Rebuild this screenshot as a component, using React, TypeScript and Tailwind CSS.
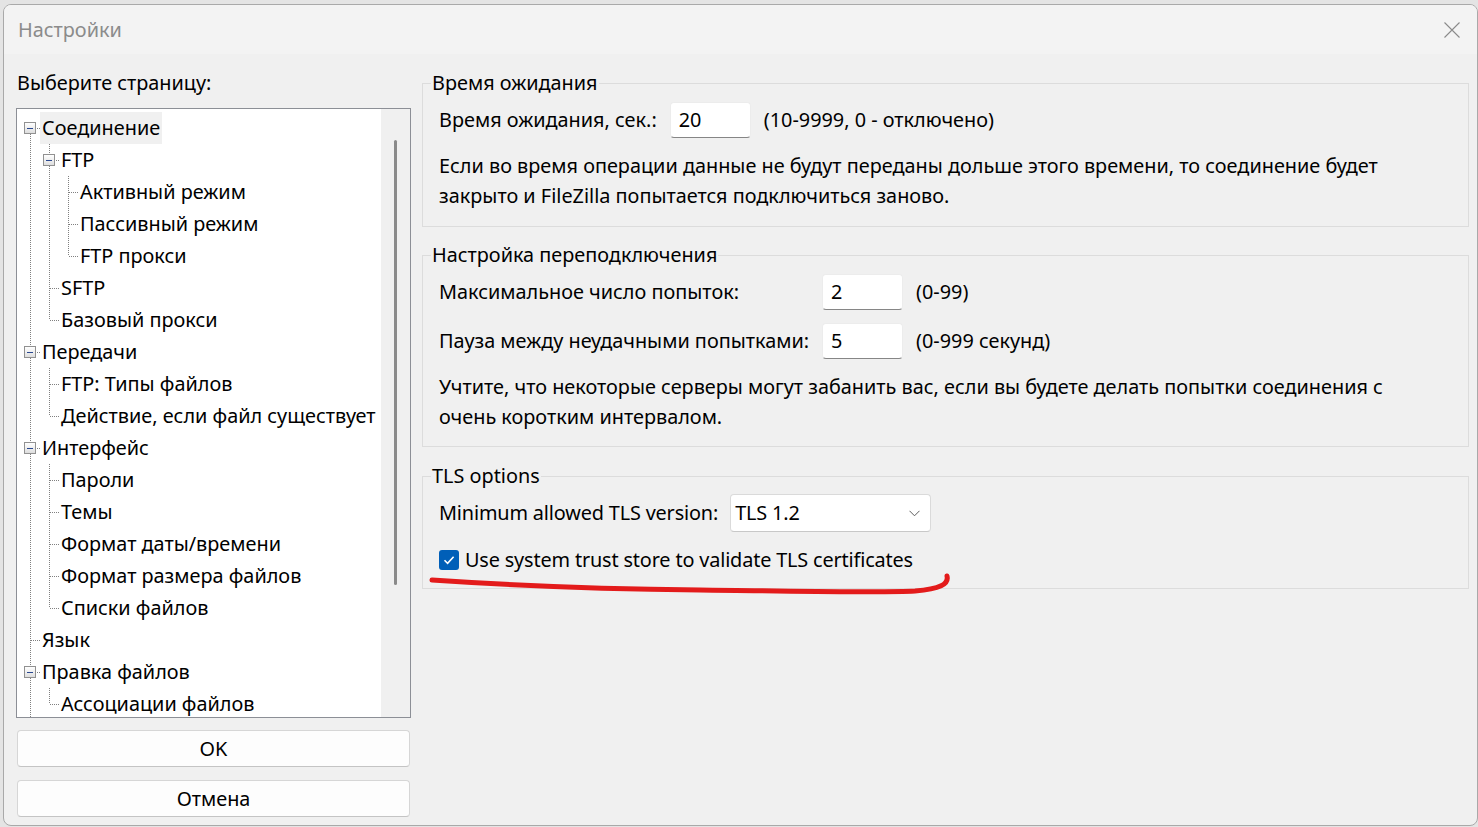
import React from "react";

type Item = { label: string; level: number; expanded?: boolean; selected?: boolean; more?: boolean };

// "more" marks a root item whose next sibling is scrolled out of view
const items: Item[] = [
  { label: "Соединение", level: 0, expanded: true, selected: true },
  { label: "FTP", level: 1, expanded: true },
  { label: "Активный режим", level: 2 },
  { label: "Пассивный режим", level: 2 },
  { label: "FTP прокси", level: 2 },
  { label: "SFTP", level: 1 },
  { label: "Базовый прокси", level: 1 },
  { label: "Передачи", level: 0, expanded: true },
  { label: "FTP: Типы файлов", level: 1 },
  { label: "Действие, если файл существует", level: 1 },
  { label: "Интерфейс", level: 0, expanded: true },
  { label: "Пароли", level: 1 },
  { label: "Темы", level: 1 },
  { label: "Формат даты/времени", level: 1 },
  { label: "Формат размера файлов", level: 1 },
  { label: "Списки файлов", level: 1 },
  { label: "Язык", level: 0 },
  { label: "Правка файлов", level: 0, expanded: true, more: true },
  { label: "Ассоциации файлов", level: 1 },
];

const font = "font-['Noto_Sans',sans-serif]";
const vDots =
  "bg-[repeating-linear-gradient(to_bottom,#808080_0px,#808080_1px,transparent_1px,transparent_2px)]";
const hDots =
  "bg-[repeating-linear-gradient(to_right,#808080_0px,#808080_1px,transparent_1px,transparent_2px)]";

function hasNextSibling(i: number) {
  if (items[i].more) return true;
  const lvl = items[i].level;
  for (let j = i + 1; j < items.length; j++) {
    if (items[j].level < lvl) return false;
    if (items[j].level === lvl) return true;
  }
  return false;
}

function ancestor(i: number, lvl: number) {
  for (let j = i - 1; j >= 0; j--) if (items[j].level === lvl) return j;
  return -1;
}

const Expander = () => (
  <div className="absolute left-[3px] top-[10px] w-[12px] h-[12px] border border-[#919191] bg-gradient-to-b from-white to-[#dedede] flex items-center justify-center">
    <div className="w-[6px] h-px bg-[#2a4890]" />
  </div>
);

const TreeRow = ({ item, index }: { item: Item; index: number }) => {
  const cells = [];
  for (let k = 0; k <= item.level; k++) {
    if (k < item.level) {
      const a = ancestor(index, k);
      cells.push(
        <div key={k} className="relative w-[19px] shrink-0">
          {a >= 0 && hasNextSibling(a) && <div className={`absolute left-[9px] top-0 bottom-0 w-px ${vDots}`} />}
        </div>
      );
    } else {
      cells.push(
        <div key={k} className="relative w-[19px] shrink-0">
          {index > 0 && <div className={`absolute left-[9px] top-0 h-[16px] w-px ${vDots}`} />}
          {hasNextSibling(index) && <div className={`absolute left-[9px] top-[16px] bottom-0 w-px ${vDots}`} />}
          <div className={`absolute left-[10px] right-0 top-[16px] h-px ${hDots}`} />
          {item.expanded && <Expander />}
        </div>
      );
    }
  }
  return (
    <div className="flex h-[32px] shrink-0">
      {cells}
      <span
        className={`px-[2px] h-[32px] leading-[32px] whitespace-nowrap ${item.selected ? "bg-[#f0f0f0]" : ""}`}
      >
        {item.label}
      </span>
    </div>
  );
};

const TextInput = ({ value }: { value: string }) => (
  <div className="w-[81px] h-[36px] bg-white rounded-[4px] border border-[#ececec] border-b-[#868686] flex items-center pl-[8px] shrink-0">
    {value}
  </div>
);

const Group = ({ title, children, className }: { title: string; children: React.ReactNode; className?: string }) => (
  <fieldset className={`border border-[#dcdcdc] m-0 p-0 min-w-0 ${className ?? ""}`}>
    <legend className="ml-[8px] px-[1px] leading-[24px]">{title}</legend>
    <div className="pl-[16px]">{children}</div>
  </fieldset>
);

export default function App() {
  return (
    <div className={`relative w-[1478px] h-[827px] overflow-hidden bg-[#e4e4e4] text-[19.85px] text-black ${font}`}>
      <div className="ml-[3px] mt-[4px] w-[1475px] h-[822px] rounded-[8px] border border-[#a9a9a9] bg-[#f0f0f0] flex flex-col overflow-hidden">
        {/* title bar */}
        <div className="h-[49px] shrink-0 bg-[#f3f3f3] flex items-center justify-between pl-[14px] pr-[16px]">
          <span className="text-[#8b8b8b] leading-[24px]">Настройки</span>
          <svg width="16" height="16" viewBox="0 0 16 16" className="mr-[1px]">
            <path d="M0.5 0.5L15.5 15.5M15.5 0.5L0.5 15.5" stroke="#8a8a8a" strokeWidth="1.1" />
          </svg>
        </div>

        {/* body */}
        <div className="flex flex-1 pl-[12px] pr-[8px]">
          {/* left column */}
          <div className="w-[395px] shrink-0 flex flex-col">
            <div className="mt-[17px] leading-[24px] pl-[1px]">Выберите страницу:</div>
            <div className="mt-[13px] h-[610px] border border-[#8c8f96] bg-white flex">
              <div className="flex-1 overflow-hidden pl-[4px] pt-[3px] flex flex-col">
                {items.map((it, i) => (
                  <TreeRow key={i} item={it} index={i} />
                ))}
              </div>
              <div className="w-[29px] bg-[#f0f0f0] shrink-0 pt-[31px] pl-[13px]">
                <div className="w-[3px] h-[445px] rounded-full bg-[#8a8a8a]" />
              </div>
            </div>
            <button className="mt-[12px] ml-[1px] h-[37px] w-[393px] rounded-[4px] border border-[#d6d6d6] border-b-[#c4c4c4] bg-[#fdfdfd] leading-[24px]">
              OK
            </button>
            <button className="mt-[13px] ml-[1px] h-[37px] w-[393px] rounded-[4px] border border-[#d6d6d6] border-b-[#c4c4c4] bg-[#fdfdfd] leading-[24px]">
              Отмена
            </button>
          </div>

          {/* right column */}
          <div className="ml-[11px] flex-1 flex flex-col pt-[17px]">
            <Group title="Время ожидания">
              <div className="pt-[7px] flex items-center">
                <span className="mr-[13px]">Время ожидания, сек.:</span>
                <TextInput value="20" />
                <span className="ml-[13px]">(10-9999, 0 - отключено)</span>
              </div>
              <p className="mt-[13px] mb-[15px] leading-[30px] whitespace-nowrap">
                Если во время операции данные не будут переданы дольше этого времени, то соединение будет
                <br />
                закрыто и FileZilla попытается подключиться заново.
              </p>
            </Group>

            <Group title="Настройка переподключения" className="mt-[16px]">
              <div className="pt-[7px] grid grid-cols-[auto_auto_1fr] gap-y-[13px] items-center">
                <span className="mr-[13px]">Максимальное число попыток:</span>
                <TextInput value="2" />
                <span className="ml-[13px]">(0-99)</span>
                <span className="mr-[13px]">Пауза между неудачными попытками:</span>
                <TextInput value="5" />
                <span className="ml-[13px]">(0-999 секунд)</span>
              </div>
              <p className="mt-[13px] mb-[14px] leading-[30px] whitespace-nowrap">
                Учтите, что некоторые серверы могут забанить вас, если вы будете делать попытки соединения с
                <br />
                очень коротким интервалом.
              </p>
            </Group>

            <Group title="TLS options" className="mt-[17px]">
              <div className="pt-[6px] flex items-center">
                <span className="mr-[12px] tracking-[-0.15px]">Minimum allowed TLS version:</span>
                <div className="w-[201px] h-[38px] bg-white rounded-[4px] border border-[#dadada] border-b-[#c8c8c8] flex items-center justify-between pl-[4px] pr-[10px]">
                  <span className="tracking-[-0.15px]">TLS 1.2</span>
                  <svg width="11" height="7" viewBox="0 0 11 7">
                    <path d="M0.5 0.8L5.5 5.8L10.5 0.8" fill="none" stroke="#5c5c5c" strokeWidth="1" />
                  </svg>
                </div>
              </div>
              <div className="mt-[15px] mb-[15px] h-[26px] flex items-center">
                <div className="w-[20px] h-[20px] rounded-[3px] bg-[#005fb8] flex items-center justify-center">
                  <svg width="14" height="14" viewBox="0 0 14 14">
                    <path d="M2.5 7.3L5.6 10.3L11.6 3.8" fill="none" stroke="white" strokeWidth="1.6" />
                  </svg>
                </div>
                <span className="ml-[6px] tracking-[-0.15px]">Use system trust store to validate TLS certificates</span>
              </div>
            </Group>
          </div>
        </div>
      </div>

      {/* hand-drawn red underline */}
      <svg className="absolute left-0 top-0 pointer-events-none" width="1478" height="827">
        <path
          d="M432 580 C 520 586, 600 589, 700 590 S 880 593, 915 591 C 940 589, 949 584, 947 576"
          fill="none"
          stroke="#e31b1b"
          strokeWidth="5"
          strokeLinecap="round"
        />
      </svg>
    </div>
  );
}
